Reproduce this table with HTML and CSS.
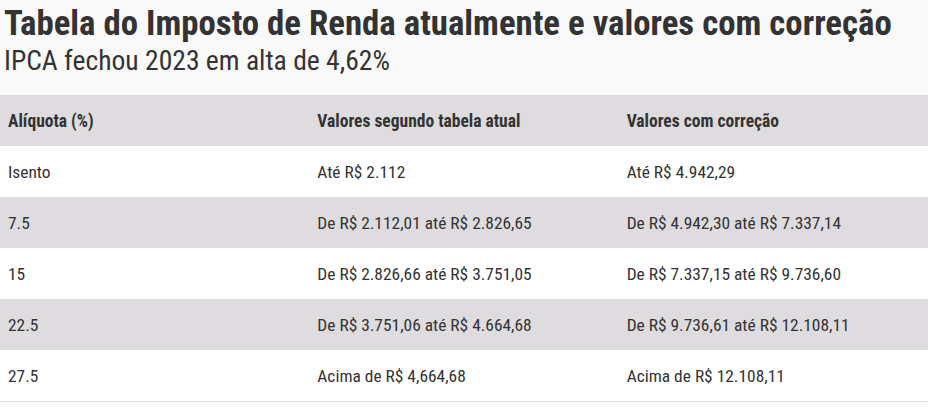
FILE: index.html
```html
<!DOCTYPE html>
<html lang="pt-BR">
<head>
<meta charset="utf-8">
<title>Tabela do Imposto de Renda</title>
<link rel="stylesheet" href="styles.css">
</head>
<body>
<div class="page">
  <header class="head">
    <h1 class="title">Tabela do Imposto de Renda atualmente e valores com correção</h1>
    <p class="subtitle">IPCA fechou 2023 em alta de 4,62%</p>
  </header>
  <table class="tbl">
    <thead>
      <tr><th>Alíquota (%)</th><th>Valores segundo tabela atual</th><th>Valores com correção</th></tr>
    </thead>
    <tbody>
      <tr><td>Isento</td><td>Até R$ 2.112</td><td>Até R$ 4.942,29</td></tr>
      <tr><td>7.5</td><td>De R$ 2.112,01 até R$ 2.826,65</td><td>De R$ 4.942,30 até R$ 7.337,14</td></tr>
      <tr><td>15</td><td>De R$ 2.826,66 até R$ 3.751,05</td><td>De R$ 7.337,15 até R$ 9.736,60</td></tr>
      <tr><td>22.5</td><td>De R$ 3.751,06 até R$ 4.664,68</td><td>De R$ 9.736,61 até R$ 12.108,11</td></tr>
      <tr><td>27.5</td><td>Acima de R$ 4,664,68</td><td>Acima de R$ 12.108,11</td></tr>
    </tbody>
  </table>
</div>
</body>
</html>
```
FILE: styles.css
```css
html, body {
  margin: 0;
  padding: 0;
  background: #f9f9f9;
}
body {
  font-family: "Roboto Condensed", Roboto, "Liberation Sans", sans-serif;
  color: #333333;
}
.page {
  width: 928px;
}
.head {
  padding: 3px 0 0 4px;
  height: 95px;
  box-sizing: border-box;
}
.title {
  margin: 0;
  font-size: 34.8px;
  line-height: 40px;
  font-weight: 700;
}
.subtitle {
  margin: 0;
  font-size: 27.6px;
  line-height: 35px;
  font-weight: 400;
}
.tbl {
  width: 928px;
  border-collapse: collapse;
  table-layout: fixed;
  border-bottom: 1px solid #dcdcdc;
}
.tbl th, .tbl td {
  text-align: left;
  padding: 0 8px;
  height: 51px;
  vertical-align: middle;
}
.tbl th {
  font-size: 17.5px;
  font-weight: 700;
}
.tbl td {
  font-size: 17.4px;
  font-weight: 400;
}
.tbl thead tr { background: #dedcde; }
.tbl tbody tr:nth-child(odd) { background: #ffffff; }
.tbl tbody tr:nth-child(even) { background: #dedcde; }
```
